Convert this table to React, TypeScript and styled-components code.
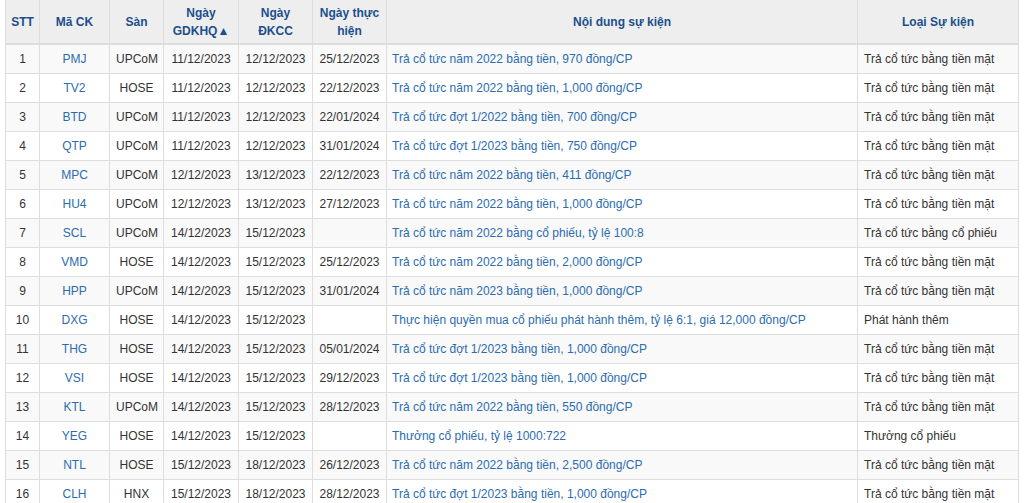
import React from "react";
import styled, { createGlobalStyle } from "styled-components";

const Global = createGlobalStyle`
  html, body { margin: 0; padding: 0; background: #ffffff; }
  body { font-family: "Liberation Sans", Arial, sans-serif; font-size: 12px; color: #333333; }
`;

const Wrap = styled.div`
  padding: 0 6px 0 5px;
`;

const Table = styled.table`
  width: 1013px;
  border-collapse: collapse;
  table-layout: fixed;
  font-family: "Liberation Sans", Arial, sans-serif;
  font-size: 12px;
  border-left: 1px solid #dddddd;
  border-right: 1px solid #dddddd;
`;

const Th = styled.th`
  background: #eeeeee;
  color: #1c4f8c;
  font-weight: bold;
  text-align: center;
  vertical-align: middle;
  padding: 4px 5px 3px;
  height: 36px;
  line-height: 18px;
  border: 1px solid #dddddd;
  border-top: 0;
  border-bottom: 2px solid #dddddd;
`;

const Tr = styled.tr<{ $odd: boolean }>`
  background: ${(p) => (p.$odd ? "#f9f9f9" : "#ffffff")};
`;

const Td = styled.td<{ $align?: "left" | "center"; $link?: boolean }>`
  border: 1px solid #dddddd;
  padding: 5px 6px;
  line-height: 18px;
  height: 18px;
  white-space: nowrap;
  overflow: hidden;
  text-align: ${(p) => p.$align ?? "center"};
  color: ${(p) => (p.$link ? "#2b6cb0" : "#333333")};
`;

const ContentTd = styled(Td)`
  padding-left: 5px;
`;

type Row = [string, string, string, string, string, string, string, string];

const rows: Row[] = [
  ["1", "PMJ", "UPCoM", "11/12/2023", "12/12/2023", "25/12/2023", "Trả cổ tức năm 2022 bằng tiền, 970 đồng/CP", "Trả cổ tức bằng tiền mặt"],
  ["2", "TV2", "HOSE", "11/12/2023", "12/12/2023", "22/12/2023", "Trả cổ tức năm 2022 bằng tiền, 1,000 đồng/CP", "Trả cổ tức bằng tiền mặt"],
  ["3", "BTD", "UPCoM", "11/12/2023", "12/12/2023", "22/01/2024", "Trả cổ tức đợt 1/2022 bằng tiền, 700 đồng/CP", "Trả cổ tức bằng tiền mặt"],
  ["4", "QTP", "UPCoM", "11/12/2023", "12/12/2023", "31/01/2024", "Trả cổ tức đợt 1/2023 bằng tiền, 750 đồng/CP", "Trả cổ tức bằng tiền mặt"],
  ["5", "MPC", "UPCoM", "12/12/2023", "13/12/2023", "22/12/2023", "Trả cổ tức năm 2022 bằng tiền, 411 đồng/CP", "Trả cổ tức bằng tiền mặt"],
  ["6", "HU4", "UPCoM", "12/12/2023", "13/12/2023", "27/12/2023", "Trả cổ tức năm 2022 bằng tiền, 1,000 đồng/CP", "Trả cổ tức bằng tiền mặt"],
  ["7", "SCL", "UPCoM", "14/12/2023", "15/12/2023", "", "Trả cổ tức năm 2022 bằng cổ phiếu, tỷ lệ 100:8", "Trả cổ tức bằng cổ phiếu"],
  ["8", "VMD", "HOSE", "14/12/2023", "15/12/2023", "25/12/2023", "Trả cổ tức năm 2022 bằng tiền, 2,000 đồng/CP", "Trả cổ tức bằng tiền mặt"],
  ["9", "HPP", "UPCoM", "14/12/2023", "15/12/2023", "31/01/2024", "Trả cổ tức năm 2023 bằng tiền, 1,000 đồng/CP", "Trả cổ tức bằng tiền mặt"],
  ["10", "DXG", "HOSE", "14/12/2023", "15/12/2023", "", "Thực hiện quyền mua cổ phiếu phát hành thêm, tỷ lệ 6:1, giá 12,000 đồng/CP", "Phát hành thêm"],
  ["11", "THG", "HOSE", "14/12/2023", "15/12/2023", "05/01/2024", "Trả cổ tức đợt 1/2023 bằng tiền, 1,000 đồng/CP", "Trả cổ tức bằng tiền mặt"],
  ["12", "VSI", "HOSE", "14/12/2023", "15/12/2023", "29/12/2023", "Trả cổ tức đợt 1/2023 bằng tiền, 1,000 đồng/CP", "Trả cổ tức bằng tiền mặt"],
  ["13", "KTL", "UPCoM", "14/12/2023", "15/12/2023", "28/12/2023", "Trả cổ tức năm 2022 bằng tiền, 550 đồng/CP", "Trả cổ tức bằng tiền mặt"],
  ["14", "YEG", "HOSE", "14/12/2023", "15/12/2023", "", "Thưởng cổ phiếu, tỷ lệ 1000:722", "Thưởng cổ phiếu"],
  ["15", "NTL", "HOSE", "15/12/2023", "18/12/2023", "26/12/2023", "Trả cổ tức năm 2022 bằng tiền, 2,500 đồng/CP", "Trả cổ tức bằng tiền mặt"],
  ["16", "CLH", "HNX", "15/12/2023", "18/12/2023", "28/12/2023", "Trả cổ tức đợt 1/2023 bằng tiền, 1,000 đồng/CP", "Trả cổ tức bằng tiền mặt"],
];

const widths = [34, 70, 54, 75, 74, 74, 471, 161];

export default function App() {
  return (
    <>
      <Global />
      <Wrap>
        <Table>
          <colgroup>
            {widths.map((w, i) => (
              <col key={i} style={{ width: w }} />
            ))}
          </colgroup>
          <thead>
            <tr>
              <Th>STT</Th>
              <Th>Mã CK</Th>
              <Th>Sàn</Th>
              <Th>
                Ngày
                <br />
                GDKHQ▲
              </Th>
              <Th>
                Ngày
                <br />
                ĐKCC
              </Th>
              <Th>
                Ngày thực
                <br />
                hiện
              </Th>
              <Th>Nội dung sự kiện</Th>
              <Th>Loại Sự kiện</Th>
            </tr>
          </thead>
          <tbody>
            {rows.map((r, i) => (
              <Tr key={r[0]} $odd={i % 2 === 0}>
                <Td>{r[0]}</Td>
                <Td $link>{r[1]}</Td>
                <Td>{r[2]}</Td>
                <Td>{r[3]}</Td>
                <Td>{r[4]}</Td>
                <Td>{r[5]}</Td>
                <ContentTd $align="left" $link>
                  {r[6]}
                </ContentTd>
                <Td $align="left">{r[7]}</Td>
              </Tr>
            ))}
          </tbody>
        </Table>
      </Wrap>
    </>
  );
}
